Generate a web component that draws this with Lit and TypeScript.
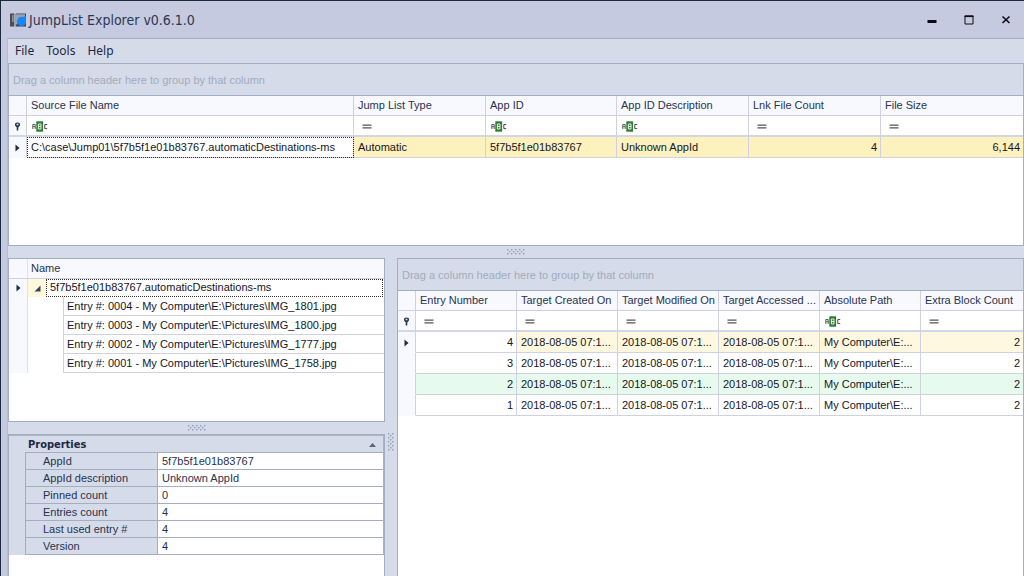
import { LitElement, html, css, svg, nothing } from "lit";
import { customElement, property, state } from "lit/decorators.js";
import { classMap } from "lit/directives/class-map.js";
import { styleMap } from "lit/directives/style-map.js";

type FilterKind = "text" | "equals";

interface Column {
  title: string;
  filter: FilterKind;
  width?: number;
  numeric?: boolean;
}

interface Row {
  cells: string[];
  tone?: "selected" | "current" | "pinned";
}

const shared = css`
  :host {
    display: block;
    box-sizing: border-box;
    min-width: 0;
    color: #16161e;
    font-family: "Liberation Sans", Tahoma, sans-serif;
    font-size: 11px;
    line-height: 16px;
  }
  *,
  *::before,
  *::after {
    box-sizing: border-box;
  }
  button,
  input {
    margin: 0;
    padding: 0;
    border: 0;
    background: none;
    color: inherit;
    font: inherit;
  }
  svg {
    display: block;
  }
  table {
    width: 100%;
    border-collapse: separate;
    border-spacing: 0;
    table-layout: fixed;
  }
`;

const pinIcon = html`<svg width="7" height="9" viewBox="0 0 7 9" aria-hidden="true">
  <path d="M1 1.5 Q3.5 -0.6 6 1.5 L6 3.4 L4.3 5.4 V8.5 H2.7 V5.4 L1 3.4 Z" fill="#2b3a55" />
  <rect x="2.6" y="1.8" width="1.8" height="1.4" fill="#dfe5f2" />
</svg>`;

const rowArrow = html`<svg width="5" height="8" viewBox="0 0 5 8" aria-hidden="true">
  <path d="M0.5 0.5 L4.5 4 L0.5 7.5 Z" fill="#1f2c45" />
</svg>`;

const abcIcon = html`<svg width="16" height="11" viewBox="0 0 16 11" aria-hidden="true">
  <path d="M0.8 8 V3.5 H3.2 V8 M0.8 5.7 H3.2" fill="none" stroke="#5b5b5b" stroke-width="1" />
  <rect x="4.3" y="0.3" width="6.8" height="10.4" fill="#2e7d32" />
  <path d="M6.4 3 H9 V8 H6.4 Z M6.4 5.5 H9" fill="none" stroke="#e8f4e8" stroke-width="1" />
  <path d="M15.2 3.5 H12.8 V7.6 H15.2" fill="none" stroke="#4a4a4a" stroke-width="1" />
</svg>`;

const equalsIcon = html`<svg width="10" height="5" viewBox="0 0 10 5" aria-hidden="true">
  <path d="M0.5 1.2 H9.5 M0.5 3.8 H9.5" stroke="#55555a" stroke-width="1.2" />
</svg>`;

@customElement("data-grid")
export class DataGrid extends LitElement {
  @property({ attribute: false }) columns: Column[] = [];
  @property({ attribute: false }) rows: Row[] = [];
  @property() label = "";

  static styles = [
    shared,
    css`
      :host {
        border: 1px solid #a3aec0;
        background: #fff;
        overflow: hidden;
      }
      .group-panel {
        height: 32px;
        padding: 0 4px;
        border-bottom: 1px solid #a3aec0;
        background: #d5dbe9;
        color: #a2abbc;
        line-height: 32px;
      }
      .gutter-column {
        width: 18px;
      }
      th,
      td {
        height: 21px;
        padding: 0 3px 0 4px;
        border-right: 1px solid #cfd1e1;
        border-bottom: 1px solid #cfd1e1;
        text-align: left;
        white-space: nowrap;
        font-weight: normal;
      }
      th {
        height: 20px;
        padding-bottom: 1px;
        background: #f7f9fe;
        color: #27334f;
      }
      .gutter {
        padding: 1px 0 0;
        background: #f7f9fe;
      }
      .body-gutter {
        border-bottom-color: #f7f9fe;
      }
      .mark {
        display: flex;
        align-items: center;
        justify-content: center;
      }
      .filter td {
        padding-top: 1px;
        border-bottom: 2px solid #d3d6e4;
      }
      .filter-box {
        display: flex;
        align-items: center;
        gap: 4px;
        padding-left: 1px;
      }
      .equals {
        padding-left: 4px;
      }
      .filter-box button {
        flex: none;
      }
      .filter-box input {
        flex: 1;
        min-width: 0;
        height: 16px;
        outline: none;
      }
      tr > :last-child {
        border-right: 0;
      }
      .numeric {
        text-align: right;
      }
      .selected td {
        background: #fdf1bd;
      }
      .current td {
        background: #fff8e0;
      }
      .pinned td {
        background: #e6fbee;
      }
      .body .gutter {
        background: #f7f9fe;
      }
      .body .focused {
        background: #fff;
      }
      .selected .focused {
        outline: 1px dotted #333;
        outline-offset: -1px;
      }
    `,
  ];

  render() {
    return html`
      <div class="group-panel">Drag a column header here to group by that column</div>
      <table aria-label=${this.label}>
        <colgroup>
          <col class="gutter-column" />
          ${this.columns.map(
            (c) => html`<col style=${styleMap({ width: c.width ? `${c.width}px` : "auto" })} />`
          )}
        </colgroup>
        <thead>
          <tr>
            <th class="gutter"></th>
            ${this.columns.map((c) => html`<th scope="col">${c.title}</th>`)}
          </tr>
          <tr class="filter">
            <td class="gutter"><div class="mark">${pinIcon}</div></td>
            ${this.columns.map(
              (c) => html`<td>
                <div class=${classMap({ "filter-box": true, equals: c.filter === "equals" })}>
                  <button type="button" aria-label="Condition for ${c.title}">
                    ${c.filter === "text" ? abcIcon : equalsIcon}
                  </button>
                  <input type="text" aria-label="Filter ${c.title}" />
                </div>
              </td>`
            )}
          </tr>
        </thead>
        <tbody>
          ${this.rows.map(
            (r, i) => html`<tr class="body ${r.tone ?? ""}">
              <td class="gutter body-gutter">
                ${i === 0 ? html`<div class="mark">${rowArrow}</div>` : nothing}
              </td>
              ${r.cells.map(
                (text, n) =>
                  html`<td
                    class=${classMap({
                      numeric: !!this.columns[n].numeric,
                      focused: i === 0 && n === 0,
                    })}
                  >${text}</td>`
              )}
            </tr>`
          )}
        </tbody>
      </table>
    `;
  }
}

@customElement("tree-list")
export class TreeList extends LitElement {
  @property() root = "";
  @property({ attribute: false }) entries: string[] = [];
  @state() private open = true;

  static styles = [
    shared,
    css`
      :host {
        border: 1px solid #a3aec0;
        background: #fff;
        overflow: hidden;
      }
      .row {
        display: grid;
        grid-template-columns: 19px minmax(0, 1fr);
      }
      .gutter {
        display: flex;
        align-items: center;
        justify-content: center;
        border-right: 1px solid #dfe1ec;
        background: #f7f9fe;
      }
      .header {
        height: 20px;
        border-bottom: 1px solid #cfd1e1;
        background: #f7f9fe;
        color: #27334f;
        line-height: 19px;
      }
      .header-text {
        padding-left: 3px;
      }
      .root {
        display: flex;
        height: 18px;
        line-height: 17px;
      }
      .toggle {
        display: flex;
        flex: none;
        align-items: center;
        justify-content: center;
        width: 18px;
        background: #fff8dc;
      }
      .root-text {
        flex: 1;
        margin-right: 1px;
        padding-left: 4px;
        outline: 1px dotted #333;
        outline-offset: -1px;
      }
      .entry {
        height: 19px;
        margin-left: 35px;
        padding-left: 3px;
        border-left: 1px solid #cfd1e1;
        border-bottom: 1px solid #cfd1e1;
        line-height: 19px;
        white-space: nowrap;
      }
    `,
  ];

  render() {
    return html`
      <div class="row header">
        <span class="gutter"></span>
        <span class="header-text">Name</span>
      </div>
      <div role="tree" aria-label="Jump lists">
        <div class="row" role="treeitem" aria-expanded=${this.open ? "true" : "false"}>
          <span class="gutter">${rowArrow}</span>
          <div class="root">
            <button
              class="toggle"
              type="button"
              aria-label="Expand or collapse"
              @click=${() => (this.open = !this.open)}
            >
              <svg width="7" height="7" viewBox="0 0 7 7" aria-hidden="true">
                <path d="M6.5 0.5 V6.5 H0.5 Z" fill="#3b4256" />
              </svg>
            </button>
            <span class="root-text">${this.root}</span>
          </div>
        </div>
        ${this.open
          ? this.entries.map(
              (e) => html`<div class="row" role="treeitem">
                <span class="gutter"></span>
                <div class="entry">${e}</div>
              </div>`
            )
          : nothing}
      </div>
    `;
  }
}

@customElement("property-grid")
export class PropertyGrid extends LitElement {
  @property({ attribute: false }) items: [string, string][] = [];
  @state() private open = true;

  static styles = [
    shared,
    css`
      :host {
        border: 1px solid #a3aec0;
        background: #fff;
        overflow: hidden;
      }
      .frame {
        border: 1px solid #a9b3c6;
        border-width: 1px 1px 0 0;
        padding-left: 16px;
        background: #d5dbe9;
      }
      .category {
        display: flex;
        align-items: center;
        justify-content: space-between;
        width: 100%;
        height: 16px;
        padding: 1px 7px 0 3px;
        color: #1c2944;
        font-family: "DejaVu Sans Condensed", Tahoma, sans-serif;
        font-weight: bold;
      }
      .columns {
        width: 132px;
      }
      th,
      td {
        height: 17px;
        padding: 0 4px;
        border-top: 1px solid #a3aec0;
        border-left: 1px solid #a3aec0;
        color: #27334f;
        font-weight: normal;
        line-height: 16px;
        text-align: left;
        white-space: nowrap;
      }
      th {
        padding-left: 17px;
      }
      td {
        background: #fff;
      }
      tr:last-child > * {
        border-bottom: 1px solid #a3aec0;
      }
    `,
  ];

  render() {
    return html`
      <div class="frame">
        <button class="category" type="button" @click=${() => (this.open = !this.open)}>
          <span>Properties</span>
          <svg width="7" height="4" viewBox="0 0 7 4" aria-hidden="true">
            <path d="M3.5 0 L7 4 H0 Z" fill="#5d6470" />
          </svg>
        </button>
        ${this.open
          ? html`<table aria-label="Properties">
              <colgroup>
                <col class="columns" />
                <col />
              </colgroup>
              <tbody>
                ${this.items.map(
                  ([k, v]) => html`<tr>
                    <th scope="row">${k}</th>
                    <td>${v}</td>
                  </tr>`
                )}
              </tbody>
            </table>`
          : nothing}
      </div>
    `;
  }
}

@customElement("split-bar")
export class SplitBar extends LitElement {
  @property({ type: Boolean, reflect: true }) vertical = false;

  static styles = [
    shared,
    css`
      :host {
        display: flex;
        align-items: center;
        justify-content: center;
        background: #d5dbe9;
      }
      :host([vertical]) {
        padding-top: 50px;
      }
    `,
  ];

  render() {
    const dots = [];
    for (let i = 0; i < 9; i++) {
      for (let j = 0; j < 3; j++) {
        if ((i + j) % 2 === 0) {
          const [x, y] = this.vertical ? [j * 2, i * 2] : [i * 2, j * 2];
          dots.push(svg`<rect x=${x} y=${y} width="1.4" height="1.4" fill="#8f9bb0" />`);
        }
      }
    }
    const [w, h] = this.vertical ? [6, 18] : [18, 6];
    return html`<svg width=${w} height=${h} viewBox="0 0 ${w} ${h}" aria-hidden="true">${dots}</svg>`;
  }
}

@customElement("app-root")
export class AppRoot extends LitElement {
  private sources: Column[] = [
    { title: "Source File Name", filter: "text", width: 327 },
    { title: "Jump List Type", filter: "equals", width: 132 },
    { title: "App ID", filter: "text", width: 131 },
    { title: "App ID Description", filter: "text", width: 132 },
    { title: "Lnk File Count", filter: "equals", width: 132, numeric: true },
    { title: "File Size", filter: "equals", numeric: true },
  ];

  private sourceRows: Row[] = [
    {
      tone: "selected",
      cells: [
        "C:\\case\\Jump01\\5f7b5f1e01b83767.automaticDestinations-ms",
        "Automatic",
        "5f7b5f1e01b83767",
        "Unknown AppId",
        "4",
        "6,144",
      ],
    },
  ];

  private targets: Column[] = [
    { title: "Entry Number", filter: "equals", width: 101, numeric: true },
    { title: "Target Created On", filter: "equals", width: 101 },
    { title: "Target Modified On", filter: "equals", width: 101 },
    { title: "Target Accessed ...", filter: "equals", width: 101 },
    { title: "Absolute Path", filter: "text", width: 101 },
    { title: "Extra Block Count", filter: "equals", numeric: true },
  ];

  private targetRows: Row[] = [4, 3, 2, 1].map((n) => ({
    tone: n === 4 ? "current" : n === 2 ? "pinned" : undefined,
    cells: [
      String(n),
      "2018-08-05 07:1...",
      "2018-08-05 07:1...",
      "2018-08-05 07:1...",
      "My Computer\\E:...",
      "2",
    ],
  }));

  private entries = [
    "Entry #: 0004 - My Computer\\E:\\Pictures\\IMG_1801.jpg",
    "Entry #: 0003 - My Computer\\E:\\Pictures\\IMG_1800.jpg",
    "Entry #: 0002 - My Computer\\E:\\Pictures\\IMG_1777.jpg",
    "Entry #: 0001 - My Computer\\E:\\Pictures\\IMG_1758.jpg",
  ];

  private details: [string, string][] = [
    ["AppId", "5f7b5f1e01b83767"],
    ["AppId description", "Unknown AppId"],
    ["Pinned count", "0"],
    ["Entries count", "4"],
    ["Last used entry #", "4"],
    ["Version", "4"],
  ];

  static styles = [
    shared,
    css`
      :host {
        display: flex;
        flex-direction: column;
        height: 100vh;
        padding-left: 6px;
        border-top: 1px solid #1b2a3f;
        border-left: 1px solid #1b2a3f;
        background: #c5cae0;
        overflow: hidden;
      }
      .title-bar {
        display: flex;
        flex: none;
        align-items: center;
        gap: 3px;
        height: 37px;
        padding-left: 3px;
      }
      .title {
        flex: 1;
        margin: 0;
        color: #2c3852;
        font-family: "DejaVu Sans Condensed", Tahoma, sans-serif;
        font-size: 14px;
        font-weight: normal;
        line-height: 20px;
      }
      .caption-buttons {
        display: flex;
      }
      .caption-button {
        display: flex;
        align-items: center;
        justify-content: center;
        width: 37px;
        height: 24px;
      }
      .client {
        display: flex;
        flex: 1;
        flex-direction: column;
        min-height: 0;
        border-top: 1px solid #a3aec0;
        border-left: 1px solid #b3bbcd;
        background: #d5dbe9;
      }
      .menu {
        display: flex;
        flex: none;
        gap: 12px;
        height: 24px;
        padding: 0 7px;
        color: #1c2944;
        font-family: "Noto Sans", Tahoma, sans-serif;
        font-size: 12px;
      }
      .top-grid {
        flex: none;
        height: 183px;
      }
      .bar {
        flex: none;
        height: 12px;
      }
      .lower {
        display: grid;
        flex: 1;
        grid-template-columns: 377px 12px minmax(0, 1fr);
        min-height: 0;
      }
      .left {
        display: flex;
        flex-direction: column;
        min-height: 0;
      }
      .tree {
        flex: none;
        height: 164px;
      }
      .props {
        flex: 1;
      }
      .detail-grid,
      .props {
        border-bottom: 0;
      }
    `,
  ];

  render() {
    return html`
      <header class="title-bar">
        <svg width="16" height="14" viewBox="0 0 16 14" aria-hidden="true">
          <rect x="0" y="0.5" width="4.6" height="13" fill="#4a4d52" />
          <rect x="2.4" y="2" width="1" height="7" fill="#b9bcc2" />
          <rect x="4.6" y="0.5" width="1" height="13" fill="#e4e7ee" />
          <rect x="5.6" y="0.5" width="10.4" height="13" fill="#3d4654" />
          <path d="M6 1.2 H15 V4 L6 12 Z" fill="#93a4bb" />
          <circle cx="11.6" cy="8.4" r="4.6" fill="#1a86f5" />
          <path d="M10 5 L15.8 3 V9 Z" fill="#1a86f5" />
        </svg>
        <h1 class="title">JumpList Explorer v0.6.1.0</h1>
        <div class="caption-buttons">
          <button class="caption-button" type="button" aria-label="Minimize">
            <svg width="10" height="10" viewBox="0 0 10 10" aria-hidden="true">
              <rect x="0.5" y="5" width="9" height="3" fill="#0c0c12" />
            </svg>
          </button>
          <button class="caption-button" type="button" aria-label="Maximize">
            <svg width="10" height="10" viewBox="0 0 10 10" aria-hidden="true">
              <path d="M1 1 H9 V9 H1 Z" fill="none" stroke="#0c0c12" />
              <rect x="0.5" y="0.5" width="9" height="1.6" fill="#0c0c12" />
            </svg>
          </button>
          <button class="caption-button" type="button" aria-label="Close">
            <svg width="10" height="10" viewBox="0 0 10 10" aria-hidden="true">
              <path d="M1.5 1.5 L8.5 8 M8.5 1.5 L1.5 8" stroke="#0c0c12" stroke-width="1.6" />
            </svg>
          </button>
        </div>
      </header>
      <main class="client">
        <nav class="menu" aria-label="Main menu">
          <button type="button">File</button>
          <button type="button">Tools</button>
          <button type="button">Help</button>
        </nav>
        <data-grid
          class="top-grid"
          label="Jump list files"
          .columns=${this.sources}
          .rows=${this.sourceRows}
        ></data-grid>
        <split-bar class="bar"></split-bar>
        <div class="lower">
          <div class="left">
            <tree-list class="tree" .root=${"5f7b5f1e01b83767.automaticDestinations-ms"} .entries=${this.entries}></tree-list>
            <split-bar class="bar"></split-bar>
            <property-grid class="props" .items=${this.details}></property-grid>
          </div>
          <split-bar vertical></split-bar>
          <data-grid
            class="detail-grid"
            label="Jump list entries"
            .columns=${this.targets}
            .rows=${this.targetRows}
          ></data-grid>
        </div>
      </main>
    `;
  }
}
